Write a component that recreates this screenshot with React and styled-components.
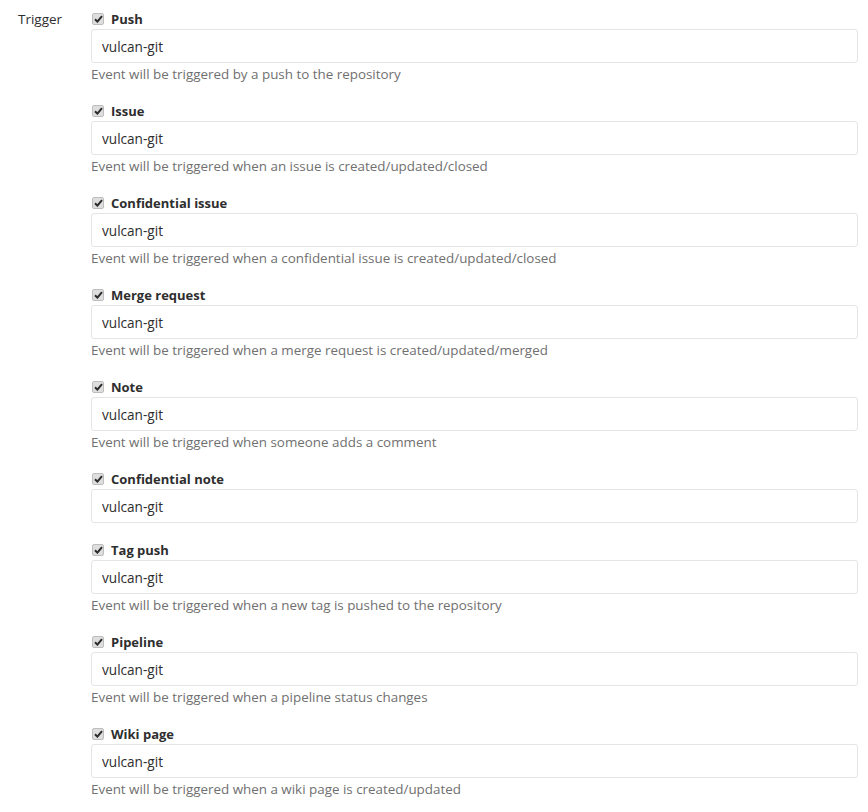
import React from 'react'
import styled, { createGlobalStyle } from 'styled-components'

const GlobalStyle = createGlobalStyle`
  body {
    margin: 0;
    background: #fff;
    font-family: "Open Sans", "Noto Sans", sans-serif;
    color: #2e2e2e;
  }
`

const triggers = [
  { name: 'Push', help: 'Event will be triggered by a push to the repository' },
  { name: 'Issue', help: 'Event will be triggered when an issue is created/updated/closed' },
  { name: 'Confidential issue', help: 'Event will be triggered when a confidential issue is created/updated/closed' },
  { name: 'Merge request', help: 'Event will be triggered when a merge request is created/updated/merged' },
  { name: 'Note', help: 'Event will be triggered when someone adds a comment' },
  { name: 'Confidential note' },
  { name: 'Tag push', help: 'Event will be triggered when a new tag is pushed to the repository' },
  { name: 'Pipeline', help: 'Event will be triggered when a pipeline status changes' },
  { name: 'Wiki page', help: 'Event will be triggered when a wiki page is created/updated' },
]

const Check = () => (
  <CheckBox>
    <svg width="9" height="8" viewBox="0 0 9 8">
      <path d="M1 4.2 L3.4 6.6 L8 1.2" fill="none" stroke="#2b2b2b" strokeWidth="2" />
    </svg>
  </CheckBox>
)

const App = () => {
  return (
    <>
      <GlobalStyle />
      <FormRow>
        <RowLabel>Trigger</RowLabel>
        <Fields>
          {triggers.map(t => (
            <Field key={t.name}>
              <CheckLabel>
                <Check />
                <CheckText>{t.name}</CheckText>
              </CheckLabel>
              <Input defaultValue="vulcan-git" />
              {t.help && <Help>{t.help}</Help>}
            </Field>
          ))}
        </Fields>
      </FormRow>
    </>
  )
}

const FormRow = styled.div`
  display: flex;
  padding: 9px 10px 0 18px;
`

const RowLabel = styled.div`
  width: 73px;
  flex-shrink: 0;
  font-size: 13.5px;
  line-height: 20px;
  color: #2e2e2e;
`

const Fields = styled.div`
  flex: 1;
  min-width: 0;
`

const Field = styled.div`
  margin-bottom: 17px;
`

const CheckLabel = styled.label`
  display: flex;
  align-items: center;
  height: 20px;
`

const CheckText = styled.span`
  margin-left: 7px;
  font-size: 13px;
  font-weight: 700;
  color: #2e2e2e;
`

const CheckBox = styled.span`
  display: inline-flex;
  align-items: center;
  justify-content: center;
  box-sizing: border-box;
  width: 12px;
  height: 12px;
  margin-left: 1px;
  border: 1px solid #bdbdbd;
  border-radius: 2px;
  background: #dedede;
`

const Input = styled.input`
  display: block;
  box-sizing: border-box;
  width: 100%;
  height: 34px;
  padding: 0 10px;
  border: 1px solid #e5e5e5;
  border-radius: 3px;
  font-family: inherit;
  font-size: 13.6px;
  color: #2e2e2e;
  outline: none;
`

const Help = styled.div`
  margin-top: 2px;
  font-size: 13.4px;
  line-height: 19px;
  color: #707070;
`

export default App
